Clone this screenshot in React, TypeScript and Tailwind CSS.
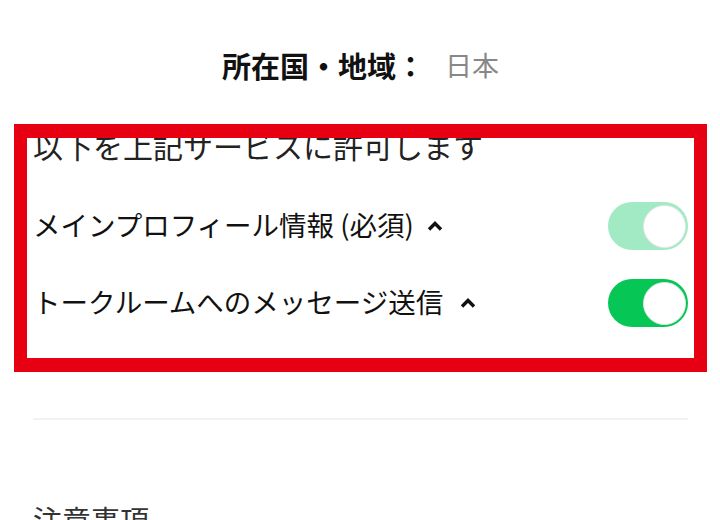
import React from "react";

const jp = { fontFamily: '"Noto Sans CJK JP", "Noto Sans", sans-serif' };

function Caret() {
  return (
    <svg width="16" height="10" viewBox="0 0 16 10" className="shrink-0">
      <polyline points="2,8.5 8,2.5 14,8.5" fill="none" stroke="#111" strokeWidth="3.4" strokeLinejoin="miter" />
    </svg>
  );
}

function Toggle({ light }: { light?: boolean }) {
  return (
    <div
      className={
        "w-[80px] h-[48px] rounded-full flex items-center justify-end pr-[2px] shrink-0 " +
        (light ? "bg-[#a2eac3]" : "bg-[#06c755]")
      }
    >
      <div className="w-[43px] h-[43px] rounded-full bg-white border border-[#e6e6e6]" />
    </div>
  );
}

function Row({ label, gap, light }: { label: string; gap: string; light?: boolean }) {
  return (
    <div className="h-[48px] flex items-center justify-between">
      <div className="flex items-center">
        <span className="text-[27.5px] leading-[40px] text-[#111] -mt-[4px]">{label}</span>
        <span className={gap}>
          <Caret />
        </span>
      </div>
      <Toggle light={light} />
    </div>
  );
}

export default function App() {
  return (
    <div className="relative w-[720px] h-[520px] overflow-hidden bg-white" style={jp}>
      <div className="pl-[33px] pr-[32px]">
        <div className="mt-[45px] h-[40px] flex items-center justify-center">
          <span className="text-[29px] leading-[40px] font-bold text-[#111]">所在国・地域：</span>
          <span className="ml-[20px] text-[27px] leading-[40px] text-[#888]">日本</span>
        </div>

        <div className="mt-[40px] h-[42px] text-[30px] leading-[40px] text-[#222]">
          以下を上記サービスに許可します
        </div>

        <div className="mt-[35px] flex flex-col gap-[29px]">
          <Row label="メインプロフィール情報 (必須)" gap="ml-[13px]" light />
          <Row label="トークルームへのメッセージ送信" gap="ml-[17px]" />
        </div>

        <div className="mt-[91px] h-[2px] bg-[#f2f2f2]" />

        <div className="mt-[79px] h-[40px] text-[29px] leading-[40px] text-[#333]">注意事項</div>
      </div>

      {/* red annotation frame */}
      <div className="absolute left-[14px] top-[124px] w-[693px] h-[248px] border-[#e60012] border-x-[13px] border-y-[14px]" />
    </div>
  );
}
